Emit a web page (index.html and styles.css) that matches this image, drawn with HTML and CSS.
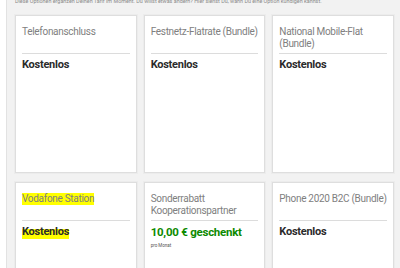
FILE: index.html
```html
<!DOCTYPE html>
<html lang="de">
<head>
    <meta charset="UTF-8">
    <meta name="viewport" content="width=device-width, initial-scale=1.0">
    <title>Meine Optionen</title>
    <link rel="stylesheet" href="styles.css">
</head>
<body>

    <div class="panel">
        <p class="intro">Diese Optionen ergänzen Deinen Tarif im Moment. Du willst etwas ändern? Hier siehst Du, wann Du eine Option kündigen kannst.</p>

        <div class="option-grid">
            <div class="option-card">
                <div class="option-title">Telefonanschluss</div>
                <div class="option-price">Kostenlos</div>
            </div>
            <div class="option-card">
                <div class="option-title">Festnetz-Flatrate (Bundle)</div>
                <div class="option-price">Kostenlos</div>
            </div>
            <div class="option-card">
                <div class="option-title">National Mobile-Flat (Bundle)</div>
                <div class="option-price">Kostenlos</div>
            </div>

            <div class="option-card">
                <div class="option-title"><mark class="marker">Vodafone Station</mark></div>
                <div class="option-price"><mark class="marker marker-low">Kostenlos</mark></div>
            </div>
            <div class="option-card">
                <div class="option-title">Sonderrabatt Kooperationspartner</div>
                <div class="option-price discount">10,00 € geschenkt</div>
                <div class="option-note">pro Monat</div>
            </div>
            <div class="option-card">
                <div class="option-title">Phone 2020 B2C (Bundle)</div>
                <div class="option-price">Kostenlos</div>
            </div>
        </div>
    </div>

</body>
</html>
```

FILE: styles.css
```css
:root {
    --page-bg: #ffffff;
    --panel-bg: #f2f2f2;
    --panel-border: #e2e2e2;
    --card-bg: #ffffff;
    --card-border: #dedede;
    --divider: #dcdcdc;
    --title-color: #808080;
    --text-color: #2b2b2b;
    --green: #0c8a00;
    --marker: #ffff00;
}

body {
    margin: 0;
    font-family: Roboto, "Liberation Sans", Arial, sans-serif;
    background-color: var(--page-bg);
    color: var(--text-color);
    overflow: hidden;
}

.panel {
    margin: -3px 0 0 6px;
    padding: 0 6px 0 8px;
    background-color: var(--panel-bg);
    border-left: 1px solid var(--panel-border);
    min-height: 300px;
}

.intro {
    margin: 0 0 10px;
    font-size: 5.4px;
    line-height: 8px;
    color: #8a8a8a;
    white-space: nowrap;
}

.option-grid {
    display: grid;
    grid-template-columns: repeat(3, 1fr);
    column-gap: 7px;
    row-gap: 9px;
}

.option-card {
    box-sizing: border-box;
    height: 158px;
    padding: 10px 6px 0;
    background-color: var(--card-bg);
    border: 1px solid var(--card-border);
    box-shadow: 0 0 0 1px #ececec;
}

.option-title {
    min-height: 24px;
    padding-bottom: 3px;
    border-bottom: 1px solid var(--divider);
    font-size: 10px;
    line-height: 12px;
    letter-spacing: -0.3px;
    color: var(--title-color);
}

.option-price {
    margin-top: 4px;
    font-size: 11px;
    line-height: 14px;
    font-weight: 700;
    letter-spacing: -0.25px;
    color: var(--text-color);
}

.option-price.discount {
    font-size: 11.5px;
    color: var(--green);
}

.option-note {
    margin-top: 4px;
    font-size: 4.5px;
    line-height: 6px;
    color: #555;
}

.marker {
    background-color: var(--marker);
    color: inherit;
    padding: 0 0 1px;
}

.marker-low {
    padding: 2px 0 1px;
    background: linear-gradient(transparent 35%, var(--marker) 35%);
}
```
